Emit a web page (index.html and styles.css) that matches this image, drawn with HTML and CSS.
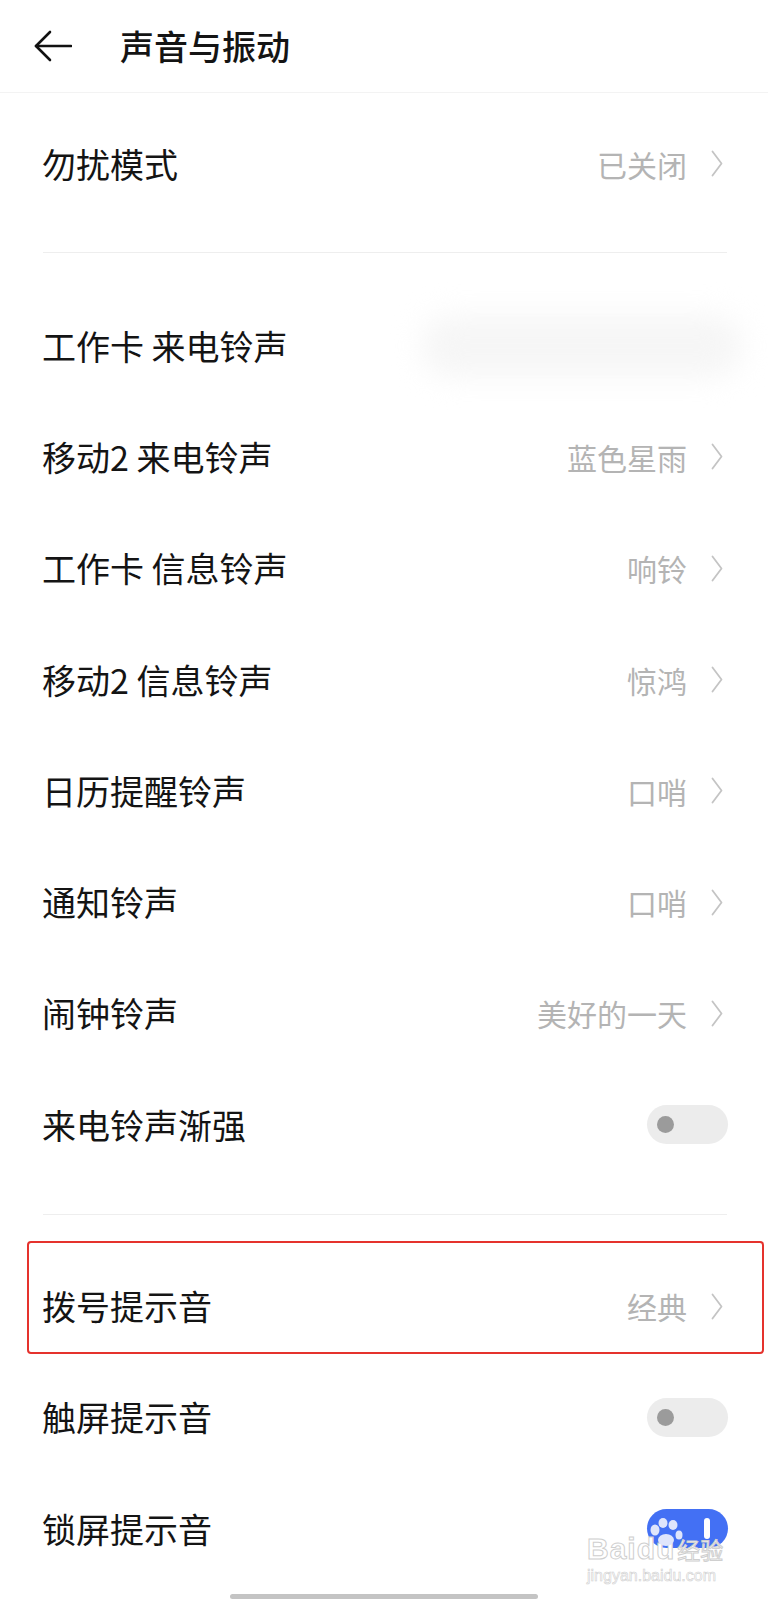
FILE: index.html
```html
<!doctype html>
<html lang="zh-CN">
<head>
    <meta charset="utf-8">
    <meta name="viewport" content="width=device-width, initial-scale=1.0">
    <title>声音与振动</title>
    <link rel="stylesheet" href="styles.css">
</head>
<body>
    <div class="page">
        <div class="top-bar">
            <svg class="back" viewBox="0 0 38 32" fill="none" stroke="#111" stroke-width="2.6" stroke-linecap="round" stroke-linejoin="round">
                <path d="M2 16 H37"/>
                <path d="M16 2 L2 16 L16 30"/>
            </svg>
            <h1>声音与振动</h1>
        </div>

        <div class="group group-first">
            <div class="row">
                <span class="label">勿扰模式</span>
                <span class="value">已关闭<svg viewBox="0 0 12 27" fill="none" stroke="#c4c4c4" stroke-width="1.8" stroke-linecap="round" stroke-linejoin="round"><path d="M1.5 1.5 L10.5 13.5 L1.5 25.5"/></svg></span>
            </div>
        </div>
        <div class="line"></div>

        <div class="group group-ring">
            <div class="row">
                <span class="label">工作卡 来电铃声</span>
                <span class="blur"></span>
            </div>
            <div class="row">
                <span class="label">移动2 来电铃声</span>
                <span class="value">蓝色星雨<svg viewBox="0 0 12 27" fill="none" stroke="#c4c4c4" stroke-width="1.8" stroke-linecap="round" stroke-linejoin="round"><path d="M1.5 1.5 L10.5 13.5 L1.5 25.5"/></svg></span>
            </div>
            <div class="row">
                <span class="label">工作卡 信息铃声</span>
                <span class="value">响铃<svg viewBox="0 0 12 27" fill="none" stroke="#c4c4c4" stroke-width="1.8" stroke-linecap="round" stroke-linejoin="round"><path d="M1.5 1.5 L10.5 13.5 L1.5 25.5"/></svg></span>
            </div>
            <div class="row">
                <span class="label">移动2 信息铃声</span>
                <span class="value">惊鸿<svg viewBox="0 0 12 27" fill="none" stroke="#c4c4c4" stroke-width="1.8" stroke-linecap="round" stroke-linejoin="round"><path d="M1.5 1.5 L10.5 13.5 L1.5 25.5"/></svg></span>
            </div>
            <div class="row">
                <span class="label">日历提醒铃声</span>
                <span class="value">口哨<svg viewBox="0 0 12 27" fill="none" stroke="#c4c4c4" stroke-width="1.8" stroke-linecap="round" stroke-linejoin="round"><path d="M1.5 1.5 L10.5 13.5 L1.5 25.5"/></svg></span>
            </div>
            <div class="row">
                <span class="label">通知铃声</span>
                <span class="value">口哨<svg viewBox="0 0 12 27" fill="none" stroke="#c4c4c4" stroke-width="1.8" stroke-linecap="round" stroke-linejoin="round"><path d="M1.5 1.5 L10.5 13.5 L1.5 25.5"/></svg></span>
            </div>
            <div class="row">
                <span class="label">闹钟铃声</span>
                <span class="value">美好的一天<svg viewBox="0 0 12 27" fill="none" stroke="#c4c4c4" stroke-width="1.8" stroke-linecap="round" stroke-linejoin="round"><path d="M1.5 1.5 L10.5 13.5 L1.5 25.5"/></svg></span>
            </div>
            <div class="row">
                <span class="label">来电铃声渐强</span>
                <span class="switch"></span>
            </div>
        </div>
        <div class="line"></div>

        <div class="group group-tips">
            <div class="row marked">
                <span class="label">拨号提示音</span>
                <span class="value">经典<svg viewBox="0 0 12 27" fill="none" stroke="#c4c4c4" stroke-width="1.8" stroke-linecap="round" stroke-linejoin="round"><path d="M1.5 1.5 L10.5 13.5 L1.5 25.5"/></svg></span>
            </div>
            <div class="row">
                <span class="label">触屏提示音</span>
                <span class="switch"></span>
            </div>
            <div class="row">
                <span class="label">锁屏提示音</span>
                <span class="switch on"></span>
            </div>
        </div>

        <div class="home-bar"></div>

        <!-- watermark over the last switch -->
        <div class="watermark">
            <svg class="paw" viewBox="0 0 34 30" fill="#dfe5fb">
                <ellipse cx="6" cy="12" rx="4.5" ry="5.5"/>
                <ellipse cx="14" cy="5" rx="4.5" ry="5"/>
                <ellipse cx="24" cy="7" rx="4.5" ry="5"/>
                <ellipse cx="30" cy="17" rx="3.5" ry="4.5"/>
                <ellipse cx="17" cy="22" rx="8" ry="6"/>
            </svg>
            <div class="wm-name">Baidu<span>经验</span></div>
            <div class="wm-site">jingyan.baidu.com</div>
        </div>
    </div>
</body>
</html>
```

FILE: styles.css
```css
body {
    margin: 0;
    padding: 0;
    background-color: #fff;
    color: #141414;
    font-family: "Noto Sans CJK SC", "Noto Sans", sans-serif;
}
.page {
    position: relative;
    height: 1600px;
    overflow: hidden;
}
.top-bar {
    height: 92px;
    display: flex;
    align-items: center;
    padding-left: 34px;
    border-bottom: 1px solid #f3f3f3;
}
.top-bar .back {
    width: 38px;
    height: 32px;
    margin-right: 48px;
}
.top-bar h1 {
    margin: 0;
    font-size: 34px;
    font-weight: 500;
    line-height: 1;
}
.group-first {
    padding: 15.3px 0 32.4px;
}
.group-ring {
    padding: 37px 0 34px;
}
.group-tips {
    padding-top: 35px;
}
.line {
    height: 1px;
    background-color: #eeeeee;
    margin: 0 41px 0 43px;
}
.row {
    height: 111.3px;
    display: flex;
    align-items: center;
    justify-content: space-between;
    padding: 0 40px 0 42px;
    box-sizing: border-box;
}
.row .label {
    font-size: 34px;
    line-height: 1;
}
.row .value {
    display: flex;
    align-items: center;
    font-size: 30px;
    line-height: 1;
    color: #b4b4b4;
}
.row .value svg {
    width: 12px;
    height: 27px;
    margin-left: 24px;
    margin-right: 5px;
}
.row .blur {
    width: 320px;
    height: 62px;
    margin-right: -14px;
    border-radius: 28px;
    background-color: #f6f6f6;
    filter: blur(14px);
}
.switch {
    position: relative;
    width: 81px;
    height: 39px;
    border-radius: 20px;
    background-color: #ececec;
}
.switch::before {
    content: "";
    position: absolute;
    left: 10px;
    top: 11px;
    width: 17px;
    height: 17px;
    border-radius: 50%;
    background-color: #9b9b9b;
}
.switch.on {
    background-color: #4370f4;
}
.switch.on::before {
    left: 57px;
    top: 9px;
    width: 6px;
    height: 21px;
    border-radius: 3px;
    background-color: #fff;
}
.marked {
    position: relative;
}
.marked::after {
    content: "";
    position: absolute;
    top: -9px;
    bottom: 8px;
    left: 27px;
    right: 4px;
    border: 2.5px solid #e5322d;
    border-radius: 4px;
}
.home-bar {
    width: 308px;
    height: 5px;
    margin: 10px auto 0;
    border-radius: 3px;
    background-color: #c4c4c4;
}
.watermark {
    position: absolute;
    left: 587px;
    top: 1514px;
    width: 150px;
    color: #fff;
    font-family: "Liberation Sans", sans-serif;
}
.watermark .paw {
    position: absolute;
    left: 62px;
    top: 4px;
    width: 34px;
    height: 30px;
}
.wm-name {
    margin-top: 22px;
    font-size: 30px;
    font-weight: bold;
    line-height: 26px;
    letter-spacing: 1px;
    white-space: nowrap;
    -webkit-text-stroke: 1px #cfcfcf;
}
.wm-name span {
    margin-left: 2px;
    font-family: "Noto Sans CJK SC", sans-serif;
    font-size: 23px;
    font-weight: normal;
    letter-spacing: 0;
}
.wm-site {
    margin-top: 6px;
    font-size: 16px;
    line-height: 16px;
    -webkit-text-stroke: 0.6px #cfcfcf;
}
```
